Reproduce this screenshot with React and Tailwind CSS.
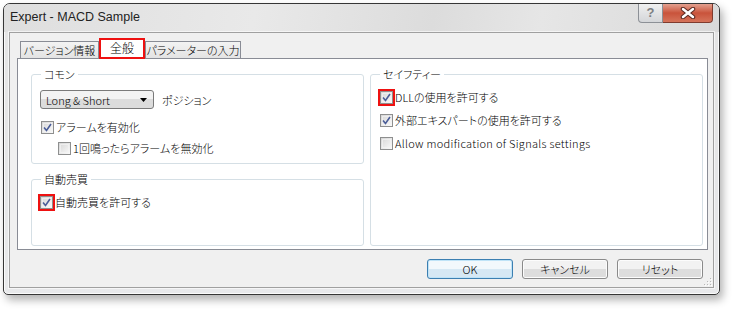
import { useState } from 'react'

const ui = "font-['Noto_Sans_CJK_JP','Noto_Sans',sans-serif] font-light [font-feature-settings:'palt'] text-[11px] leading-[14px] text-black"

function Check({ checked, marked }) {
  return (
    <span
      className={
        'relative flex h-[13px] w-[13px] shrink-0 items-center justify-center border border-[#8e8f8f] bg-gradient-to-br from-[#d6d6d6] to-[#fafafa] ' +
        (marked ? 'outline-2 outline-[#ee1111]' : '')
      }
    >
      <span className="absolute inset-[1px] border border-[#f4f4f4]/70" />
      {checked && (
        <svg width="9" height="9" viewBox="0 0 9 9" className="relative">
          <path d="M1 4.5 L3.5 7.5 L8 1" fill="none" stroke="#4a5d98" strokeWidth="1.6" />
        </svg>
      )}
    </span>
  )
}

function Row({ checked, marked, label, className = '', textClass = '' }) {
  return (
    <div className={'flex items-center gap-[2px] ' + className}>
      <Check checked={checked} marked={marked} />
      <span className={'whitespace-nowrap ' + textClass}>{label}</span>
    </div>
  )
}

function Group({ title, className = '', children }) {
  return (
    <fieldset className={'rounded-[3px] border border-[#d5dfe5] px-[8px] ' + className}>
      <legend className="ml-[1px] px-[3px] leading-[14px]">{title}</legend>
      {children}
    </fieldset>
  )
}

function Button({ label, primary }) {
  return (
    <button
      type="button"
      className={
        'h-[20px] w-[86px] rounded-[3px] border leading-[18px] ' +
        (primary
          ? 'border-[#3c7fb1] bg-gradient-to-b from-[#f2f8fc] from-50% to-[#d6e8f4] to-50% shadow-[inset_0_0_0_1px_#bfe3f7]'
          : 'border-[#8a8a8a] bg-gradient-to-b from-[#f2f2f2] from-50% to-[#dddddd] to-50% shadow-[inset_0_0_0_1px_#fcfcfc]')
      }
    >
      {label}
    </button>
  )
}

export default function App() {
  const [tab] = useState(1)
  const tabs = [
    { label: 'バージョン情報', w: 'w-[79px]' },
    { label: '全般', w: 'w-[46px]' },
    { label: 'パラメーターの入力', w: 'w-[96px]' },
  ]

  return (
    <div className={'h-[311px] w-[736px] bg-white pl-[3px] pt-[3px] ' + ui}>
      <div className="flex h-[292px] w-[717px] flex-col rounded-t-[7px] rounded-b-[5px] border border-[#363636] bg-gradient-to-b from-[#e4e4e4] to-[#e8e9eb] shadow-[3px_5px_8px_rgba(0,0,0,0.3),inset_0_0_0_1px_rgba(255,255,255,0.8)]">
        {/* Title bar */}
        <div className="flex h-[28px] items-start rounded-t-[6px] bg-[linear-gradient(100deg,#dedede_0%,#e9e9e9_35%,#dcdcdc_60%,#e6e6e6_75%,#d9d9d9_100%)]">
          <span className="pl-[6px] pt-[6px] font-['Liberation_Sans',sans-serif] text-[12.5px] font-normal leading-[15px] text-[#222]">
            Expert - MACD Sample
          </span>
          <div className="ml-auto mr-[6px] flex">
            <div className="flex h-[19px] w-[25px] items-center justify-center rounded-bl-[4px] border border-t-0 border-[#8c9096] bg-gradient-to-b from-[#f0f0f0] to-[#d4d6d9] font-['Liberation_Sans',sans-serif] text-[13px] font-bold text-[#7d7f83]">
              ?
            </div>
            <div className="flex h-[19px] w-[50px] items-center justify-center rounded-br-[4px] border border-l-0 border-t-0 border-[#7f3b2e] bg-gradient-to-b from-[#e3a08f] via-[#c9533b] to-[#d5735a]">
              <svg width="16" height="12" viewBox="0 0 16 12">
                <path d="M3 2 L13 10 M13 2 L3 10" stroke="#5a2a22" strokeWidth="4.5" strokeLinecap="round" />
                <path d="M3 2 L13 10 M13 2 L3 10" stroke="#ffffff" strokeWidth="2.5" strokeLinecap="round" />
              </svg>
            </div>
          </div>
        </div>

        {/* Client area */}
        <div className="mx-[5px] flex h-[256px] flex-col border border-[#a0a0a0] bg-[#f0f0f0] shadow-[0_0_0_1px_rgba(255,255,255,0.6)]">
          {/* Tabs */}
          <div className="mt-[5px] flex h-[20px] items-end pl-[10px]">
            {tabs.map((t, i) =>
              i === tab ? (
                <div
                  key={t.label}
                  className={'relative z-10 -mb-px flex h-[21px] items-center justify-center border-2 border-[#ee1111] bg-white pb-[1px] text-[12px] ' + t.w}
                >
                  {t.label}
                </div>
              ) : (
                <div
                  key={t.label}
                  className={'flex h-[17px] items-center justify-center whitespace-nowrap border border-b-0 border-[#898c95] bg-gradient-to-b from-[#f3f3f3] to-[#e3e3e3] ' + t.w}
                >
                  {t.label}
                </div>
              ),
            )}
          </div>

          {/* Tab panel */}
          <div className="ml-[7px] mr-[5px] flex h-[192px] gap-[6px] border border-[#898c95] bg-white pl-[13px] pr-[4px] pt-[8px]">
            <div className="flex w-[333px] flex-col">
              <Group title="コモン" className="h-[97px]">
                <div className="mt-[9px] flex items-center gap-[8px]">
                  <div className="flex h-[19px] w-[114px] items-center justify-between rounded-[3px] border border-[#7a7a7a] bg-gradient-to-b from-[#f3f3f3] from-50% to-[#dcdcdc] to-50% pl-[5px] pr-[6px]">
                    <span>Long &amp; Short</span>
                    <svg width="7" height="4" viewBox="0 0 7 4">
                      <path d="M0 0 H7 L3.5 4 Z" fill="#000" />
                    </svg>
                  </div>
                  <span>ポジション</span>
                </div>
                <Row checked label="アラームを有効化" className="ml-[1px] mt-[11px]" />
                <Row label="1回鳴ったらアラームを無効化" className="ml-[18px] mt-[7px]" />
              </Group>
              <div className="h-[8px]" />
              <Group title="自動売買" className="h-[74px]">
                <Row checked marked label="自動売買を許可する" className="mt-[9px]" />
              </Group>
            </div>
            <div className="flex w-[333px] flex-col">
              <Group title="セイフティー" className="h-[179px]">
                <Row checked marked label="DLLの使用を許可する" className="ml-[1px] mt-[9px]" />
                <Row checked label="外部エキスパートの使用を許可する" className="ml-[1px] mt-[9px]" />
                <Row
                  label="Allow modification of Signals settings"
                  className="ml-[1px] mt-[9px]"
                  textClass="tracking-[0.3px]"
                />
              </Group>
            </div>
          </div>

          {/* Buttons */}
          <div className="flex flex-1 items-start pt-[9px]">
            <div className="ml-auto flex gap-[9px]">
              <Button label="OK" primary />
              <Button label="キャンセル" />
              <Button label="リセット" />
            </div>
            <svg width="10" height="9" viewBox="0 0 10 9" className="mb-[1px] self-end">
              {[[7, 1], [4, 4], [7, 4], [1, 7], [4, 7], [7, 7]].map(([x, y]) => (
                <g key={`${x}-${y}`}>
                  <rect x={x + 1} y={y + 1} width="1" height="1" fill="#ffffff" />
                  <rect x={x} y={y} width="1" height="1" fill="#b8b8b8" />
                </g>
              ))}
            </svg>
          </div>
        </div>
      </div>
    </div>
  )
}
